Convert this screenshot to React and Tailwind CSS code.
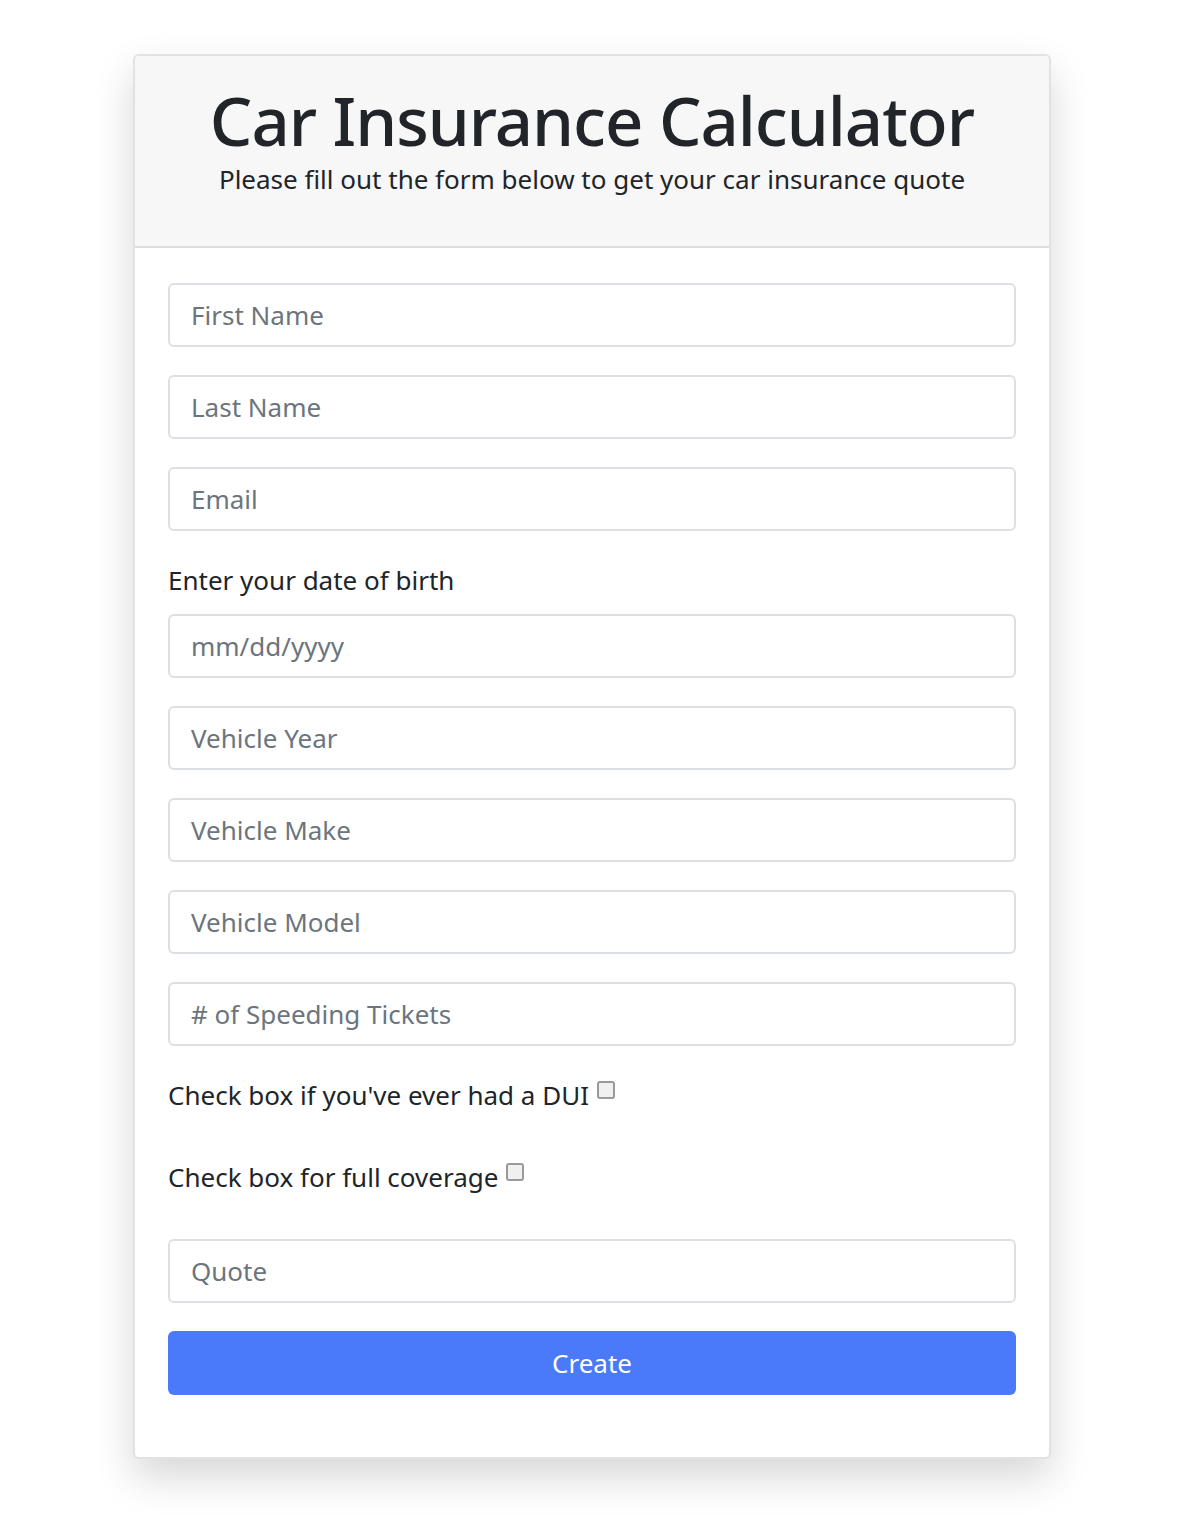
export default function App() {
  const fields = ['First Name', 'Last Name', 'Email'];
  const vehicle = ['Vehicle Year', 'Vehicle Make', 'Vehicle Model', '# of Speeding Tickets'];
  const inputCls =
    'block w-full h-[64px] rounded-[6px] border-2 border-[#dcdfe3] bg-white px-[21px] text-[26px] text-[#495057] placeholder:text-[#6c757d] outline-none';

  return (
    <div className="min-h-[1540px] bg-white pt-[54px] font-['Noto_Sans',sans-serif] text-[#212529]">
      <div className="ml-[133px] w-[918px] overflow-hidden rounded-[6px] border-2 border-[#e2e2e2] bg-white shadow-[0_18px_40px_rgba(0,0,0,0.16)]">
        <div className="flex h-[192px] flex-col items-center border-b-2 border-[#dedede] bg-[#f7f7f7] pt-[26px]">
          <h1 className="text-[67px] font-medium leading-[76px] tracking-[-1px] text-[#212529]">
            Car Insurance Calculator
          </h1>
          <p className="mt-[3px] text-[26px] leading-[36px] text-[#212529]">
            Please fill out the form below to get your car insurance quote
          </p>
        </div>
        <form className="px-[33px] pt-[35px] pb-[62px]" onSubmit={(e) => e.preventDefault()}>
          <div className="flex flex-col gap-[28px]">
            {fields.map((f) => (
              <input key={f} type="text" placeholder={f} className={inputCls} />
            ))}
          </div>
          <label className="mt-[31px] block text-[26px] leading-[36px]">Enter your date of birth</label>
          <input type="text" placeholder="mm/dd/yyyy" className={`${inputCls} mt-[16px] placeholder:text-[#3a3f44]`} />
          <div className="mt-[28px] flex flex-col gap-[28px]">
            {vehicle.map((f) => (
              <input key={f} type="text" placeholder={f} className={inputCls} />
            ))}
          </div>
          <div className="mt-[31px] flex items-start text-[26px] leading-[36px]">
            <span>Check box if you&apos;ve ever had a DUI</span>
            <span className="ml-[8px] mt-[4px] h-[18px] w-[18px] rounded-[3px] border-2 border-[#9a9a9a] bg-[#f0f0f0]" />
          </div>
          <div className="mt-[46px] flex items-start text-[26px] leading-[36px]">
            <span>Check box for full coverage</span>
            <span className="ml-[8px] mt-[4px] h-[18px] w-[18px] rounded-[3px] border-2 border-[#9a9a9a] bg-[#f0f0f0]" />
          </div>
          <input type="text" placeholder="Quote" className={`${inputCls} mt-[44px]`} />
          <button
            type="submit"
            className="mt-[28px] flex h-[64px] w-full items-center justify-center rounded-[6px] bg-[#4a7afa] text-[26px] text-white"
          >
            Create
          </button>
        </form>
      </div>
    </div>
  );
}
